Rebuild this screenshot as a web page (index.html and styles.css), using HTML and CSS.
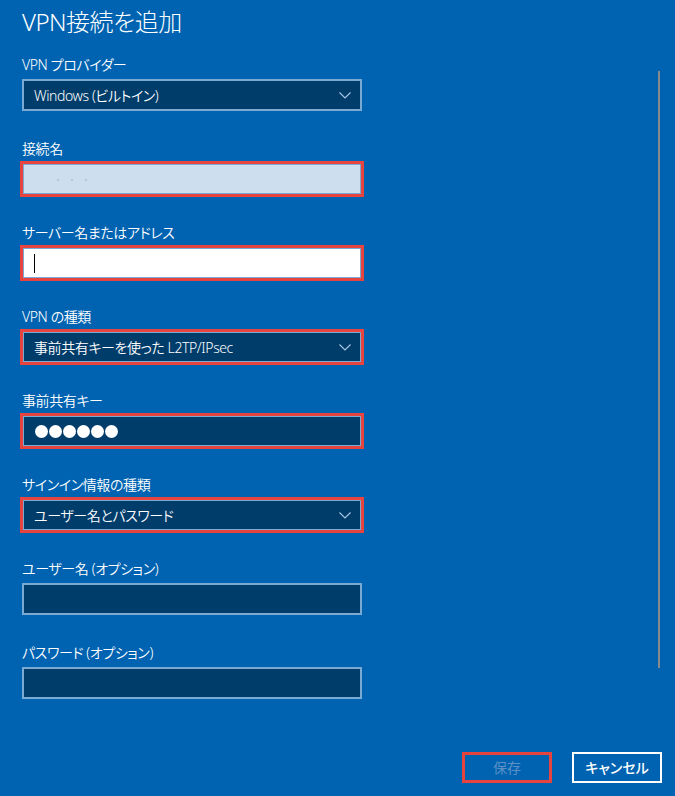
FILE: index.html
```html
<!DOCTYPE html>
<html lang="ja">
<head>
<meta charset="utf-8">
<title>VPN接続を追加</title>
<link rel="stylesheet" href="styles.css">
</head>
<body>
<div class="main">
  <div class="form">
    <h1 class="title">VPN接続を追加</h1>

    <div class="group">
      <div class="label">VPN プロバイダー</div>
      <div class="field select">
        <span class="value">Windows (ビルトイン)</span>
        <svg class="chev" width="12" height="7" viewBox="0 0 12 7"><polyline points="0.5,0.5 6,6 11.5,0.5" fill="none" stroke="#a9c9e6" stroke-width="1.1"/></svg>
      </div>
    </div>

    <div class="group">
      <div class="label">接続名</div>
      <div class="field light hl"><span class="specks"><i></i><i></i><i></i></span></div>
    </div>

    <div class="group">
      <div class="label">サーバー名またはアドレス</div>
      <div class="field white hl"><span class="caret"></span></div>
    </div>

    <div class="group">
      <div class="label">VPN の種類</div>
      <div class="field select hl">
        <span class="value">事前共有キーを使った L2TP/IPsec</span>
        <svg class="chev" width="12" height="7" viewBox="0 0 12 7"><polyline points="0.5,0.5 6,6 11.5,0.5" fill="none" stroke="#a9c9e6" stroke-width="1.1"/></svg>
      </div>
    </div>

    <div class="group">
      <div class="label">事前共有キー</div>
      <div class="field hl">
        <span class="dots"><i></i><i></i><i></i><i></i><i></i><i></i></span>
      </div>
    </div>

    <div class="group">
      <div class="label">サインイン情報の種類</div>
      <div class="field select hl">
        <span class="value">ユーザー名とパスワード</span>
        <svg class="chev" width="12" height="7" viewBox="0 0 12 7"><polyline points="0.5,0.5 6,6 11.5,0.5" fill="none" stroke="#a9c9e6" stroke-width="1.1"/></svg>
      </div>
    </div>

    <div class="group">
      <div class="label">ユーザー名 (オプション)</div>
      <div class="field"></div>
    </div>

    <div class="group">
      <div class="label">パスワード (オプション)</div>
      <div class="field"></div>
    </div>
  </div>
  <div class="scrollbar"></div>
</div>
<div class="footer">
  <button class="btn save">保存</button>
  <button class="btn cancel">キャンセル</button>
</div>
</body>
</html>
```

FILE: styles.css
```css
html, body {
  margin: 0;
  padding: 0;
}
body {
  width: 675px;
  height: 796px;
  overflow: hidden;
  box-sizing: border-box;
  background: #0063b1;
  color: #ffffff;
  font-family: "Noto Sans", "Noto Sans CJK JP", sans-serif;
  font-feature-settings: "palt";
  padding: 6px 13px 0 22px;
}
.main {
  display: flex;
  align-items: flex-start;
}
.form {
  width: 340px;
  display: flex;
  flex-direction: column;
}
.title {
  margin: 0 0 17px 0;
  font-size: 24px;
  line-height: 32px;
  font-weight: 300;
  letter-spacing: -0.5px;
  color: #ffffff;
}
.group {
  display: flex;
  flex-direction: column;
  margin-bottom: 28px;
}
.group:last-child {
  margin-bottom: 0;
}
.label {
  font-size: 14px;
  line-height: 20px;
  margin-bottom: 4px;
  letter-spacing: -0.4px;
  font-weight: 350;
  color: #ffffff;
}
.field {
  box-sizing: border-box;
  width: 340px;
  height: 32px;
  border: 2px solid #7aa9d3;
  background: #003d6b;
  display: flex;
  align-items: center;
  padding: 0 9px 0 10px;
  font-size: 14px;
  font-weight: 350;
  letter-spacing: -0.4px;
  color: #ffffff;
}
.field.hl {
  outline: 3px solid #e8443f;
  outline-offset: -1px;
}
.field.light {
  background: #cddfee;
}
.field.white {
  background: #ffffff;
}
.select .value {
  flex: 1;
  white-space: nowrap;
}
.chev {
  display: block;
}
.caret {
  display: block;
  width: 1px;
  height: 19px;
  background: #000000;
}
.specks {
  display: flex;
  gap: 12px;
  margin-left: 23px;
  margin-top: 2px;
}
.specks i {
  display: block;
  width: 2px;
  height: 2px;
  background: #b8c6d2;
}
.dots {
  display: flex;
  gap: 1px;
  margin-left: 1px;
}
.dots i {
  display: block;
  width: 13px;
  height: 13px;
  border-radius: 50%;
  background: #ffffff;
}
.scrollbar {
  margin-left: auto;
  margin-right: 2px;
  margin-top: 65px;
  width: 2px;
  height: 597px;
  background: #8a8a8a;
}
.footer {
  display: flex;
  justify-content: flex-end;
  gap: 20px;
  margin-top: 53px;
}
.btn {
  box-sizing: border-box;
  width: 90px;
  height: 31px;
  font-family: "Noto Sans", "Noto Sans CJK JP", sans-serif;
  font-feature-settings: "palt";
  font-size: 14px;
  line-height: 1;
  padding: 0;
  background: transparent;
  cursor: default;
}
.btn.save {
  border: 3px solid #e8443f;
  color: #5b91c6;
}
.btn.cancel {
  border: 2px solid #ffffff;
  color: #ffffff;
  font-weight: 500;
}
```
